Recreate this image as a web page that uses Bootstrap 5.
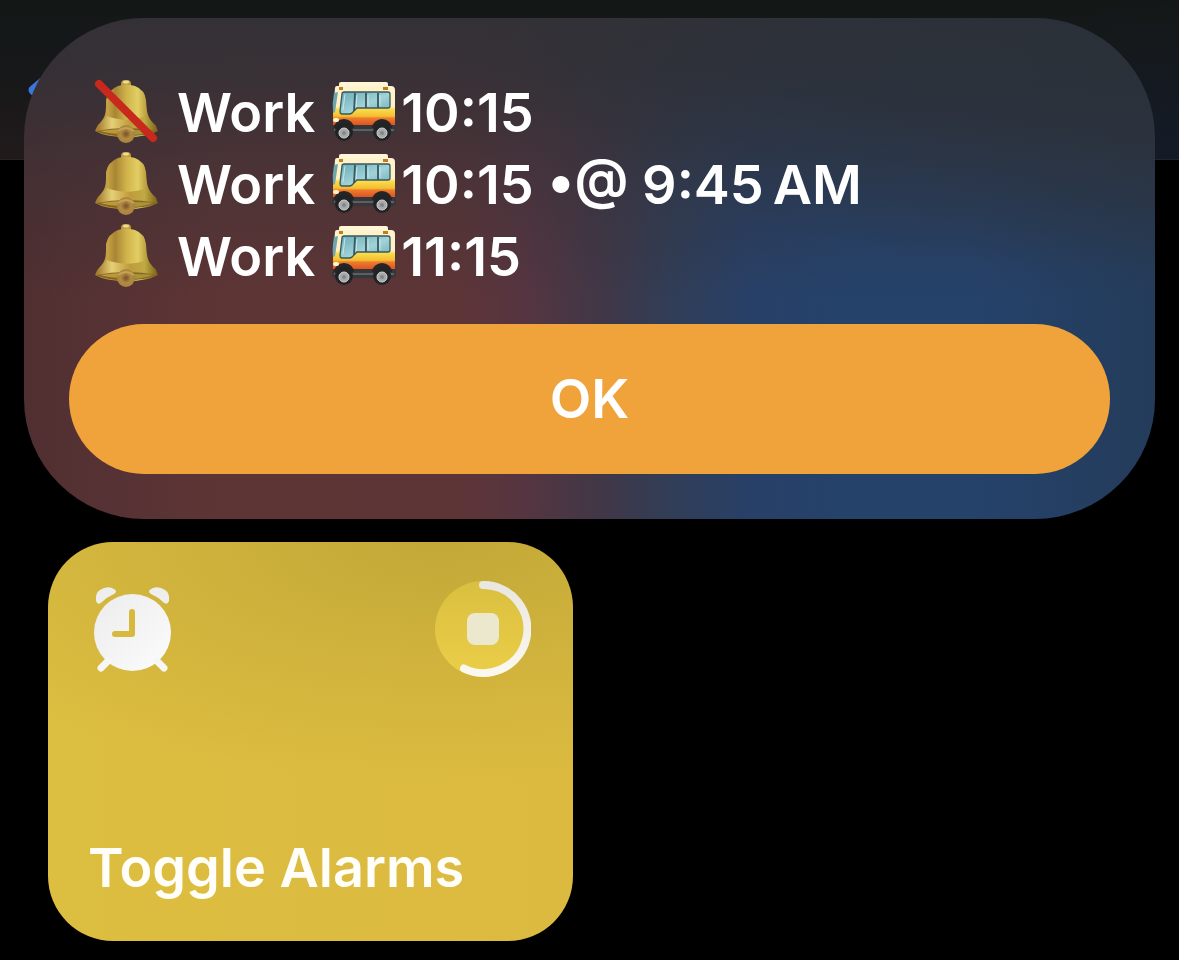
<!DOCTYPE html>
<html lang="en">
<head>
<meta charset="utf-8">
<meta name="viewport" content="width=device-width, initial-scale=1">
<title>Toggle Alarms</title>
<link href="https://cdn.jsdelivr.net/npm/bootstrap@5.3.0/dist/css/bootstrap.min.css" rel="stylesheet">
<style>
  body { background: #000; color: #fff; font-family: Inter, "Liberation Sans", sans-serif; font-size: 54px; font-weight: 600; line-height: 72px; }
  .app-bar { height: 160px; background: radial-gradient(ellipse 25% 100% at 100% 100%, #121b27, transparent), linear-gradient(#131817, #171819 50%, #211a1b); border-bottom: 1px solid #222528; z-index: -1; }
  .back-link { padding: 68px 0 0 24px; line-height: 0; }
  .page-stack { padding: 18px 24px; }
  .alert-panel {
    border-radius: 120px; padding: 57px 45px 45px;
    background:
      radial-gradient(ellipse 62% 50% at 100% 0, #2a3038 0, rgba(42,49,58,.75) 40%, rgba(42,49,58,0) 100%),
      linear-gradient(180deg, #343136 0, rgba(50,48,54,.85) 12%, rgba(50,48,54,.4) 32%, rgba(50,48,54,0) 56%),
      linear-gradient(90deg, #502f31 0, #573234 8%, #5e3535 18%, #5e3536 38%, #563540 44%, #413747 51%, #313d56 57%, #284067 64%, #25426b 72%, #25426b 84%, #243c5a 100%);
  }
  .alarm-list { padding-left: 24px; margin-bottom: 33px; }
  .alarm-list li { height: 72px; }
  .alarm-list span { padding-top: 4px; }
  .emoji { width: 66px; height: 66px; flex: none; }
  .alarm-name { margin: 0 16px 0 18px; }
  .ok-btn { height: 150px; border-radius: 75px; background: #f1a33b; color: #fff; font: inherit; border: 0; }
  .ok-btn:hover { background: #e99a32; color: #fff; }
  .tile-grid { display: grid; grid-template-columns: 1fr 1fr; gap: 33px; padding: 23px 24px 0; }
  .shortcut-tile {
    min-height: 399px; border-radius: 65px; padding: 39px 42px 37px 40px;
    background: radial-gradient(ellipse 110% 60% at 75% 0, #c3a838 0, #cfb23c 45%, rgba(221,188,64,0) 100%), linear-gradient(90deg, #dcbe40, #dcba40);
  }
  .stop-btn { line-height: 0; border: 0; background: none; }
  .clock-icon { margin: 5px 0 0 6px; }
  .tile-title { color: #fffef8; }
</style>
</head>
<body>
<svg width="0" height="0" class="position-absolute" aria-hidden="true">
  <defs>
    <linearGradient id="brass" x1="0" x2="1">
      <stop offset="0" stop-color="#9b7929"/><stop offset=".2" stop-color="#c5a344"/><stop offset=".32" stop-color="#a98534"/><stop offset=".5" stop-color="#d0b34b"/><stop offset=".68" stop-color="#e2ce64"/><stop offset=".84" stop-color="#b69636"/><stop offset="1" stop-color="#786019"/>
    </linearGradient>
    <linearGradient id="lip" x1="0" x2="1">
      <stop offset="0" stop-color="#a17a2c"/><stop offset=".25" stop-color="#e5d077"/><stop offset=".55" stop-color="#bf9b3b"/><stop offset=".8" stop-color="#c0a944"/><stop offset="1" stop-color="#806819"/>
    </linearGradient>
    <radialGradient id="clapper"><stop offset="0" stop-color="#795026"/><stop offset=".55" stop-color="#b18a43"/><stop offset="1" stop-color="#a8843a"/></radialGradient>
    <linearGradient id="glass" x2="1" y2="1"><stop offset="0" stop-color="#69adb9"/><stop offset=".55" stop-color="#a1d2d8"/><stop offset="1" stop-color="#6eafb9"/></linearGradient>
    <linearGradient id="paint" x2="0" y2="1"><stop offset="0" stop-color="#fff3cc"/><stop offset=".5" stop-color="#fff0c5"/><stop offset=".57" stop-color="#fbdc4b"/><stop offset=".74" stop-color="#f4bd31"/><stop offset=".78" stop-color="#ee7d2c"/><stop offset="1" stop-color="#d94821"/></linearGradient>
    <symbol id="bell" viewBox="0 0 66 66">
      <rect x="28" y="2" width="10" height="8" rx="4" fill="#bd9b45"/>
      <ellipse cx="33" cy="4" rx="3" ry="1.5" fill="#f0dc91"/>
      <path d="M25 8Q33 5 42 8Q52 12 53 22C54 35 54 38 60 45Q64 49 65 53Q54 59 34 59Q12 59 2 53Q3 49 7 45C13 38 13 35 13 22Q15 12 25 8Z" fill="url(#brass)"/>
      <path d="M14 38C27 43 42 43 53 38Q57 43 61 46C65 49 64 51 58 53Q34 57 9 53Q2 52 5 47Q10 43 14 38Z" fill="url(#lip)"/>
      <path d="M3 53Q34 47 64 53Q55 58 33 58Q12 58 3 53Z" fill="#86651e"/>
      <path d="M7 53Q20 51 33 51V56Q15 56 7 53Z" fill="#bb983e"/>
      <path d="M41 52Q53 52 60 53Q52 56 41 57Z" fill="#a6933a"/>
      <circle cx="33" cy="56" r="9" fill="url(#clapper)"/>
      <path d="M25 53Q33 47 41 53" fill="none" stroke="#c6a256" stroke-width="2"/>
    </symbol>
    <symbol id="bus" viewBox="0 0 66 66">
      <rect x="8" y="4" width="49" height="8" rx="2" fill="#fff6d8"/>
      <path d="M6 8H60Q64 8 64 12V49H2V34L4 10Q4 8 6 8Z" fill="url(#paint)"/>
      <path d="M3 15L7 14L4 34L2 35Q1 25 3 15Z" fill="#6da6ad"/>
      <path d="M13 14H57Q59 14 59 16V28Q59 30 57 30H26L21 35Q20 36 18 36H11Q9 36 9 33L11 16Q11 14 13 14Z" fill="url(#glass)" stroke="#38575b" stroke-width="1.300"/>
      <path d="M24 15L23 33M35 15V30M47 15V30" stroke="#38575b" stroke-width="1.800"/>
      <path d="M12 32L14 16M26 17L25 29M37 17V28M49 17V28" stroke="#d8eff0" stroke-width=".8"/>
      <path d="M8 9H12V12H8ZM52 9H57V12H52Z" fill="#c47b20"/>
      <path d="M2 47H65V53Q65 56 62 56H5Q1 56 1 52Z" fill="#35373a"/>
      <path d="M3 52H63" stroke="#5d6063" stroke-width="2"/>
      <path d="M3 50A10 9 0 0 1 23 50ZM41 50A10 9 0 0 1 61 50Z" fill="#252526"/>
      <g fill="#222324"><circle cx="13" cy="54" r="9"/><circle cx="51" cy="54" r="9"/></g>
      <g fill="#a6a8a9" stroke="#d4d5d5"><circle cx="13" cy="55" r="5"/><circle cx="51" cy="55" r="5"/></g>
      <g fill="#85878a"><circle cx="13" cy="55" r="2"/><circle cx="51" cy="55" r="2"/></g>
      <rect x="2" y="40" width="6" height="4" rx="2" fill="#fff5c9"/>
    </symbol>
  </defs>
</svg>

<nav class="app-bar position-absolute top-0 start-0 w-100" aria-label="App">
  <a href="#" class="back-link d-inline-block" aria-label="Back">
    <svg width="36" height="44" viewBox="0 0 36 44"><path d="M28 6L9 22L28 41" fill="none" stroke="#3a77d8" stroke-width="9" stroke-linecap="round" stroke-linejoin="round"/></svg>
  </a>
</nav>

<main class="page-stack">
  <section class="alert-panel" role="alertdialog" aria-label="Alarms">
    <ul class="alarm-list list-unstyled text-nowrap">
      <li class="d-flex align-items-center">
        <svg class="emoji" role="img" aria-label="Alarm off"><use href="#bell"/><path d="M6 6L60 60" stroke="#c9291d" stroke-width="5" stroke-linecap="square"/><path d="M6 6L60 60" stroke="#c9291d" stroke-width="8" stroke-linecap="round"/></svg>
        <span class="alarm-name">Work</span>
        <svg class="emoji" role="img" aria-label="Bus"><use href="#bus"/></svg>
        <span class="ms-1">10:15</span>
      </li>
      <li class="d-flex align-items-center">
        <svg class="emoji" role="img" aria-label="Alarm on"><use href="#bell"/></svg>
        <span class="alarm-name">Work</span>
        <svg class="emoji" role="img" aria-label="Bus"><use href="#bus"/></svg>
        <span class="ms-1">10:15 •@ 9:45&#8239;AM</span>
      </li>
      <li class="d-flex align-items-center">
        <svg class="emoji" role="img" aria-label="Alarm on"><use href="#bell"/></svg>
        <span class="alarm-name">Work</span>
        <svg class="emoji" role="img" aria-label="Bus"><use href="#bus"/></svg>
        <span class="ms-1">11:15</span>
      </li>
    </ul>
    <button type="button" class="btn ok-btn d-block w-100">OK</button>
  </section>

  <div class="tile-grid">
    <article class="shortcut-tile d-flex flex-column justify-content-between">
      <div class="d-flex justify-content-between align-items-start">
        <svg class="clock-icon" width="78" height="87" viewBox="0 0 78 87" aria-hidden="true">
          <defs><linearGradient id="face" x2="1" y2="1"><stop offset="0" stop-color="#ececec"/><stop offset="1" stop-color="#fcfcfc"/></linearGradient></defs>
          <g fill="#eeeeed">
            <path d="M8 16Q4 20 2 15Q1 7 6 4Q12 0 18 2Q25 5 20 8Q13 11 8 16Z"/>
            <path d="M69 16Q73 20 75 15Q76 7 71 4Q65 0 59 2Q52 5 57 8Q64 11 69 16Z"/>
          </g>
          <circle cx="38.500" cy="46.500" r="38.500" fill="url(#face)"/>
          <path d="M14 75L7 82M63 75L70 82" stroke="#f7f7f7" stroke-width="7" stroke-linecap="round"/>
          <path d="M38 26V48H21" fill="none" stroke="#d6b93e" stroke-width="6" stroke-linecap="round" stroke-linejoin="round"/>
        </svg>
        <button type="button" class="stop-btn p-0" aria-label="Stop">
          <svg width="96" height="96" viewBox="0 0 96 96">
            <defs><linearGradient id="disc" x2="0" y2="1"><stop offset="0" stop-color="#dabf40"/><stop offset="1" stop-color="#ebce47"/></linearGradient>
            <linearGradient id="ring" x2="0" y2="1"><stop offset="0" stop-color="#e9e7e1"/><stop offset="1" stop-color="#fbf8ef"/></linearGradient></defs>
            <circle cx="48" cy="48" r="48" fill="url(#disc)"/>
            <path d="M48 4A44 44 0 1 1 29 87.500" fill="none" stroke="url(#ring)" stroke-width="8" stroke-linecap="round"/>
            <rect x="32" y="32" width="32" height="32" rx="8" fill="#ece8cd"/>
          </svg>
        </button>
      </div>
      <div class="tile-title text-nowrap">Toggle Alarms</div>
    </article>
  </div>
</main>
<script src="https://cdn.jsdelivr.net/npm/bootstrap@5.3.0/dist/js/bootstrap.bundle.min.js"></script>
</body>
</html>
